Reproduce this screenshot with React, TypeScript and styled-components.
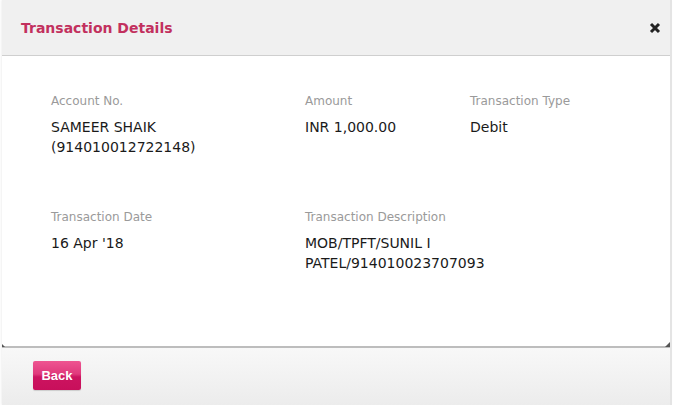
import React from "react";
import styled, { createGlobalStyle } from "styled-components";

const Global = createGlobalStyle`
  html, body { margin: 0; padding: 0; background: #fff; }
  body { font-family: "DejaVu Sans", Verdana, sans-serif; }
`;

const Modal = styled.div`
  width: 668px;
  height: 405px;
  margin-left: 2px;
  display: flex;
  flex-direction: column;
  border-right: 2px solid #e4e4e4;
  box-shadow: -1px 0 2px rgba(0,0,0,0.06);
  background: #fff;
  overflow: hidden;
`;

const Header = styled.div`
  height: 55px;
  background: #f0f0f0;
  border-bottom: 1px solid #cfcfcf;
  display: flex;
  align-items: center;
  justify-content: space-between;
  padding: 0 9px 0 19px;
  flex-shrink: 0;
`;

const Title = styled.h1`
  margin: 0;
  font-size: 14px;
  font-weight: bold;
  color: #c2305e;
`;

const Close = styled.button`
  border: 0;
  background: none;
  padding: 0;
  width: 12px;
  height: 12px;
  display: flex;
  cursor: pointer;
`;

const Body = styled.div`
  flex: 1;
  min-height: 0;
  padding: 37px 0 0 49px;
  display: grid;
  grid-template-columns: 254px 165px 1fr;
  grid-auto-rows: 116px;
  align-content: start;
`;

const Field = styled.div<{ $span?: number }>`
  grid-column: span ${(p) => p.$span ?? 1};
  display: flex;
  flex-direction: column;
`;

const Label = styled.div`
  font-size: 12px;
  color: #9a9a9a;
  line-height: 16px;
  margin-bottom: 10px;
`;

const Value = styled.div`
  font-size: 14px;
  color: #1a1a1a;
  line-height: 24px;
  margin-top: -4px;
`;

const Footer = styled.div`
  height: 57px;
  flex-shrink: 0;
  border-top: 2px solid #bdbdbd;
  background: linear-gradient(#f8f8f8, #ececec);
  display: flex;
  align-items: center;
  padding: 0 0 0 31px;
  position: relative;
`;

const Grip = styled.span<{ $side: "left" | "right" }>`
  position: absolute;
  top: -6px;
  ${(p) => (p.$side === "left" ? "left: -2px;" : "right: 0;")}
  width: 0;
  height: 0;
  border-bottom: 5px solid #555;
  ${(p) =>
    p.$side === "left"
      ? "border-right: 5px solid transparent;"
      : "border-left: 5px solid transparent;"}
`;

const BackButton = styled.button`
  height: 29px;
  width: 48px;
  border: 0;
  border-radius: 2px;
  background: linear-gradient(#ee5591 0%, #e0397c 45%, #cc1460 55%, #c80f5b 100%);
  color: #fff;
  font-family: "Liberation Sans", Arial, sans-serif;
  font-weight: bold;
  font-size: 13px;
  padding: 0;
  margin-top: -3px;
  box-shadow: 0 1px 1px rgba(0,0,0,0.15);
  cursor: pointer;
`;

const fields = [
  { label: "Account No.", value: ["SAMEER SHAIK", "(914010012722148)"] },
  { label: "Amount", value: ["INR 1,000.00"] },
  { label: "Transaction Type", value: ["Debit"] },
  { label: "Transaction Date", value: ["16 Apr '18"] },
  { label: "Transaction Description", value: ["MOB/TPFT/SUNIL I", "PATEL/914010023707093"], span: 2 },
];

export default function App() {
  return (
    <>
      <Global />
      <Modal>
        <Header>
          <Title>Transaction Details</Title>
          <Close aria-label="Close">
            <svg width="12" height="12" viewBox="0 0 12 12">
              <path d="M2 2 L10 10 M10 2 L2 10" stroke="#222" strokeWidth="3" strokeLinecap="butt" />
            </svg>
          </Close>
        </Header>
        <Body>
          {fields.map((f) => (
            <Field key={f.label} $span={f.span}>
              <Label>{f.label}</Label>
              {f.value.map((v) => (
                <Value key={v}>{v}</Value>
              ))}
            </Field>
          ))}
        </Body>
        <Footer>
          <Grip $side="left" />
          <Grip $side="right" />
          <BackButton>Back</BackButton>
        </Footer>
      </Modal>
    </>
  );
}
